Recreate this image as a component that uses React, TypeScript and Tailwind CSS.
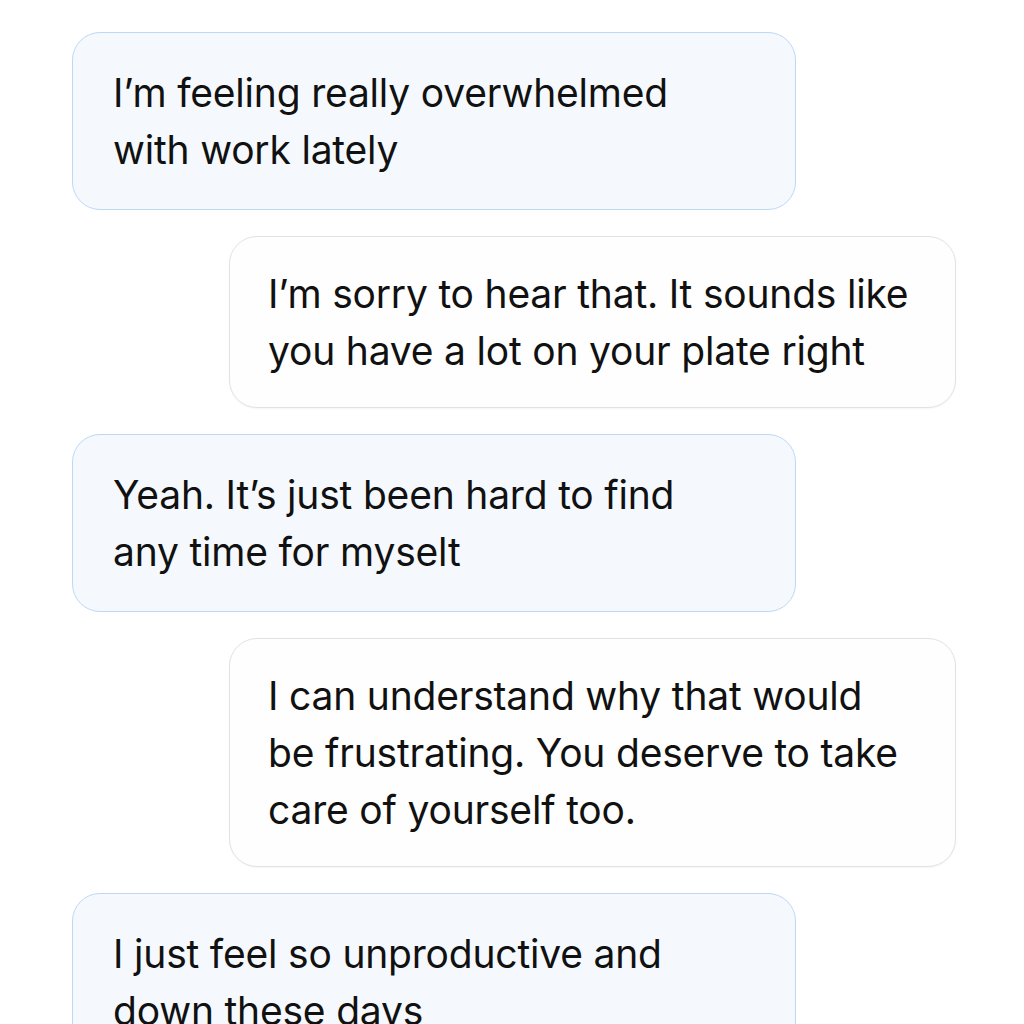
const messages = [
  { from: 'user', text: 'I’m feeling really overwhelmed with work lately' },
  { from: 'bot', text: 'I’m sorry to hear that. It sounds like you have a lot on your plate right' },
  { from: 'user', text: 'Yeah. It’s just been hard to find any time for myselt' },
  { from: 'bot', text: 'I can understand why that would be frustrating. You deserve to take care of yourself too.' },
  { from: 'user', text: 'I just feel so unproductive and down these days' },
];

function Bubble({ from, text }: { from: string; text: string }) {
  const isUser = from === 'user';
  return (
    <div className={isUser ? 'flex justify-start' : 'flex justify-end'}>
      <div
        className={
          isUser
            ? 'w-[724px] rounded-[28px] border border-[#bcd8f6] bg-[#f5f9fe] pl-[40px] pr-[82px] py-[31px]'
            : 'w-[727px] rounded-[28px] border border-[#e2e2e2] bg-[#fefefe] pl-[38px] pr-[43px] py-[28px] shadow-[0_1px_2px_rgba(0,0,0,0.04)]'
        }
      >
        <p className="text-[39px] leading-[57px] tracking-[-0.2px] text-[#111111]">{text}</p>
      </div>
    </div>
  );
}

export default function App() {
  return (
    <div
      className="min-h-screen h-[1024px] overflow-hidden bg-white"
      style={{ fontFamily: 'Inter, "Noto Sans", sans-serif' }}
    >
      <div className="flex flex-col gap-[26px] pt-[32px] pl-[72px] pr-[68px]">
        {messages.map((m, i) => (
          <Bubble key={i} from={m.from} text={m.text} />
        ))}
      </div>
    </div>
  );
}
